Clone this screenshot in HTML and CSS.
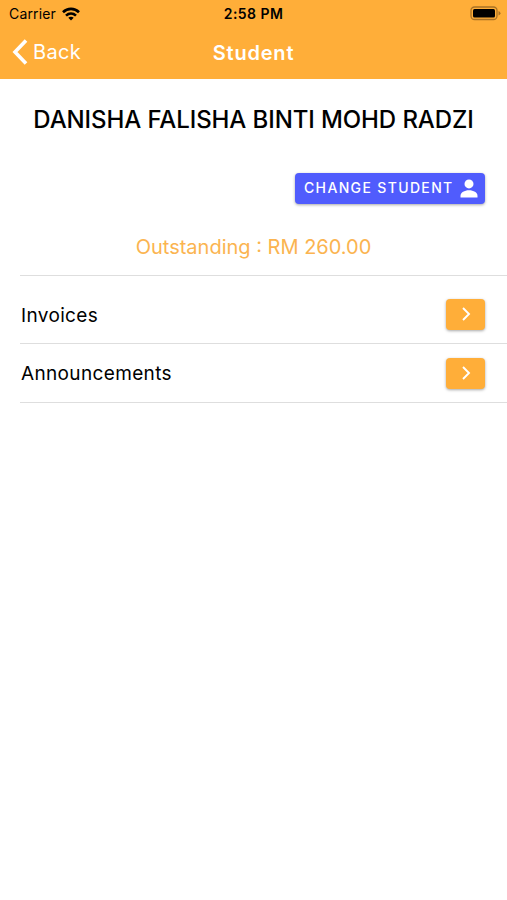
FILE: index.html
```html
<!DOCTYPE html>
<html lang="en">
<head>
  <meta charset="UTF-8">
  <meta name="viewport" content="width=device-width, initial-scale=1.0">
  <title>Student</title>
  <link rel="stylesheet" href="styles.css">
</head>
<body>
  <header class="header">
    <div class="status-bar">
      <div class="carrier">
        <span>Carrier</span>
        <svg class="wifi" viewBox="0 0 18 14" fill="none" stroke="#000" stroke-width="2.6">
          <path d="M1 5.200C5.500.8 12.500.8 17 5.200"/>
          <path d="M4 8.600c2.900-2.700 7.100-2.700 10 0"/>
          <path d="M6.300 10.800 9 13.600l2.700-2.800c-1.500-1.400-3.900-1.400-5.400 0z" fill="#000" stroke="none"/>
        </svg>
      </div>
      <span class="time">2:58 PM</span>
      <svg class="battery" viewBox="0 0 31 15">
        <rect x="1" y="1" width="26" height="12.500" rx="3.500" fill="none" stroke="#a87226" stroke-width="1.300"/>
        <rect x="3" y="3" width="22" height="8.500" rx="1.500" fill="#000"/>
        <path d="M28.500 5v4.500q2-.8 2-2.250T28.500 5z" fill="#a87226"/>
      </svg>
    </div>
    <nav class="toolbar">
      <a class="back">
        <svg class="back-icon" viewBox="0 0 16 26" fill="none" stroke="#fff" stroke-width="3.600">
          <path d="M14 1.500 3 13l11 11.500"/>
        </svg>
        <span>Back</span>
      </a>
      <h1 class="title">Student</h1>
    </nav>
  </header>

  <main>
    <h2 class="name">DANISHA FALISHA BINTI MOHD RADZI</h2>
    <div class="actions">
      <button class="change-btn">
        <span class="btn-text">CHANGE STUDENT</span>
        <svg class="person" viewBox="0 0 18 19" fill="#fff">
          <circle cx="9" cy="4.900" r="4.500"/>
          <path d="M.5 18.500v-1.800c0-3 4-5.400 8.500-5.400s8.500 2.400 8.500 5.400v1.800z"/>
        </svg>
      </button>
    </div>
    <p class="outstanding">Outstanding : RM 260.00</p>

    <div class="list">
      <div class="item item-first">
        <span class="label">Invoices</span>
        <button class="go-btn">
          <svg class="chevron" viewBox="0 0 9 14" fill="none" stroke="#fff" stroke-width="1.900"><path d="m1 1 6 6-6 6"/></svg>
        </button>
      </div>
      <div class="item">
        <span class="label">Announcements</span>
        <button class="go-btn">
          <svg class="chevron" viewBox="0 0 9 14" fill="none" stroke="#fff" stroke-width="1.900"><path d="m1 1 6 6-6 6"/></svg>
        </button>
      </div>
    </div>
  </main>
</body>
</html>
```
FILE: styles.css
```css
* {
  box-sizing: border-box;
}
body {
  margin: 0;
  font-family: Inter, Roboto, sans-serif;
  background-color: #fff;
  color: #000;
}
.header {
  height: 79px;
  background-color: #ffae39;
}
.status-bar {
  display: grid;
  grid-template-columns: 1fr auto 1fr;
  align-items: center;
  height: 27px;
  padding: 0 6px 0 9px;
  font-size: 14px;
}
.carrier {
  display: flex;
  align-items: center;
  gap: 6px;
  letter-spacing: 0.15px;
}
.wifi {
  width: 18px;
  height: 14px;
}
.time {
  margin-right: 3px;
  font-weight: 600;
  letter-spacing: 0.45px;
}
.battery {
  width: 31px;
  height: 15px;
  justify-self: end;
}
.toolbar {
  display: grid;
  grid-template-columns: 1fr auto 1fr;
  align-items: center;
  height: 50px;
  padding: 0 12px;
  color: #fff;
}
.back {
  display: flex;
  align-items: center;
  gap: 5px;
  font-size: 20px;
  letter-spacing: 0.3px;
}
.back-icon {
  width: 16px;
  height: 26px;
}
.title {
  margin: 0;
  padding-top: 1px;
  font-size: 20px;
  font-weight: 600;
  letter-spacing: 0.8px;
}
.name {
  margin: 0;
  padding-top: 26px;
  line-height: 30px;
  font-size: 24px;
  font-weight: 450;
  letter-spacing: -0.1px;
  text-align: center;
  white-space: nowrap;
}
.actions {
  display: flex;
  justify-content: flex-end;
  padding: 38px 22px 0 0;
}
button {
  display: flex;
  align-items: center;
  border: none;
  font-family: inherit;
  color: #fff;
  box-shadow: 0 1px 3px rgba(0, 0, 0, 0.35);
}
.change-btn {
  justify-content: space-between;
  width: 190px;
  height: 31px;
  padding: 0 7px 0 9px;
  border-radius: 4px;
  background-color: #505cfd;
  font-size: 14px;
  font-weight: 500;
  letter-spacing: 1.35px;
  white-space: nowrap;
}
.btn-text {
  padding-bottom: 2px;
}
.person {
  width: 18px;
  height: 19px;
}
.outstanding {
  margin: 0;
  padding-top: 31px;
  line-height: 24px;
  font-size: 20px;
  text-align: center;
  color: #fbb450;
}
.list {
  margin: 16px 0 0 20px;
  border-top: 1px solid #dedede;
}
.item {
  display: flex;
  justify-content: space-between;
  align-items: center;
  height: 59px;
  padding: 0 22px 0 1px;
  border-bottom: 1px solid #dedede;
}
.item-first {
  height: 68px;
  padding-top: 10px;
}
.label {
  padding-top: 1px;
  font-size: 19px;
  letter-spacing: 0.35px;
}
.go-btn {
  justify-content: center;
  width: 39px;
  height: 31px;
  padding: 0 0 1px 1px;
  border-radius: 4px;
  background-color: #ffae39;
}
.chevron {
  width: 9px;
  height: 14px;
}
```
